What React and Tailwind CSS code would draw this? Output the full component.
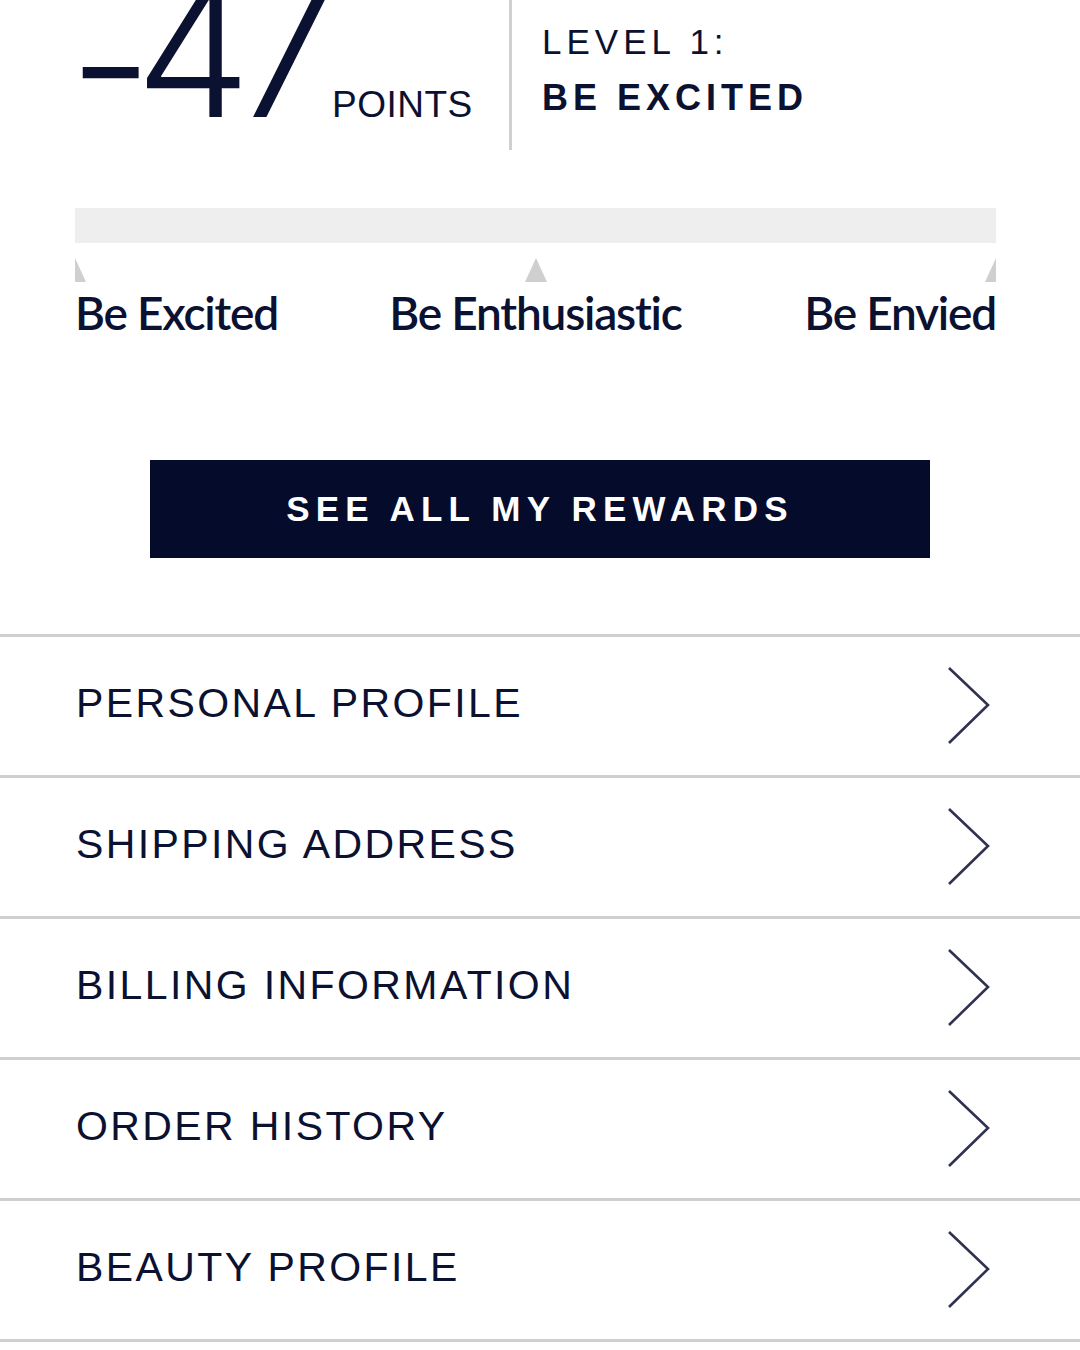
import React from "react";

const navy = "text-[#0b1130]";

function Chevron() {
  return (
    <svg width="46" height="80" viewBox="0 0 46 80" className="shrink-0">
      <polyline points="3,2 42,39 3,77" fill="none" stroke="#2f3250" strokeWidth="2.6" />
    </svg>
  );
}

function Row({ label }) {
  return (
    <div className="flex items-center justify-between h-[141px] border-b-[3px] border-[#cfcfcf] pl-[76px] pr-[88px]">
      <span className={`text-[41px] tracking-[2.4px] ${navy} -mt-[4px]`} style={{ fontFamily: '"Liberation Sans", Arial, sans-serif' }}>
        {label}
      </span>
      <Chevron />
    </div>
  );
}

function TriFull() {
  return (
    <svg width="22" height="24" viewBox="0 0 22 24" className="shrink-0">
      <polygon points="11,0 22,24 0,24" fill="#cfcfcf" />
    </svg>
  );
}

function TriLeftHalf() {
  return (
    <svg width="11" height="24" viewBox="11 0 11 24" className="shrink-0">
      <polygon points="11,0 22,24 0,24" fill="#cfcfcf" />
    </svg>
  );
}

function TriRightHalf() {
  return (
    <svg width="11" height="24" viewBox="0 0 11 24" className="shrink-0">
      <polygon points="11,0 22,24 0,24" fill="#cfcfcf" />
    </svg>
  );
}

export default function App() {
  const sans = { fontFamily: '"Liberation Sans", Arial, sans-serif' };
  return (
    <div className="w-[1080px] h-[1350px] bg-white overflow-hidden">
      {/* top */}
      <div className="flex h-[150px]">
        <div className="w-[509px] pl-[69px]">
          <div className="flex items-baseline mt-[-42px]">
            <span className={`text-[184px] leading-none font-light tracking-[-17px] ${navy}`} style={{ fontFamily: 'Inter, sans-serif' }}>
              <span className="relative top-[13px]">-</span>47
            </span>
            <span className={`ml-[12px] text-[37px] tracking-[0.5px] ${navy}`} style={sans}>POINTS</span>
          </div>
        </div>
        <div className="w-[3px] bg-[#d0d0d0]" />
        <div className="pl-[30px] pt-[24px]" style={sans}>
          <div className={`text-[35px] leading-none tracking-[5px] ${navy}`}>LEVEL 1:</div>
          <div className={`mt-[21px] text-[36px] leading-none font-bold tracking-[5px] ${navy}`}>BE EXCITED</div>
        </div>
      </div>

      {/* progress */}
      <div className="mx-[75px] w-[921px] mt-[58px]">
        <div className="h-[35px] bg-[#eeeeee]" />
        <div className="flex justify-between mt-[15px]">
          <TriLeftHalf />
          <TriFull />
          <TriRightHalf />
        </div>
        <div className={`grid grid-cols-3 mt-[8px] text-[46px] font-semibold leading-none tracking-[-1.2px] ${navy}`} style={{ fontFamily: 'Lato, sans-serif' }}>
          <div className="whitespace-nowrap">Be Excited</div>
          <div className="text-center whitespace-nowrap">Be Enthusiastic</div>
          <div className="text-right whitespace-nowrap">Be Envied</div>
        </div>
      </div>

      {/* button */}
      <div className="flex justify-center mt-[124px]">
        <div className="w-[780px] h-[98px] bg-[#050b2b] flex items-center justify-center">
          <span className="text-white text-[35px] font-bold tracking-[6.2px]" style={sans}>SEE ALL MY REWARDS</span>
        </div>
      </div>

      {/* list */}
      <div className="mt-[76px] border-t-[3px] border-[#cfcfcf]">
        <Row label="PERSONAL PROFILE" />
        <Row label="SHIPPING ADDRESS" />
        <Row label="BILLING INFORMATION" />
        <Row label="ORDER HISTORY" />
        <Row label="BEAUTY PROFILE" />
      </div>
    </div>
  );
}
